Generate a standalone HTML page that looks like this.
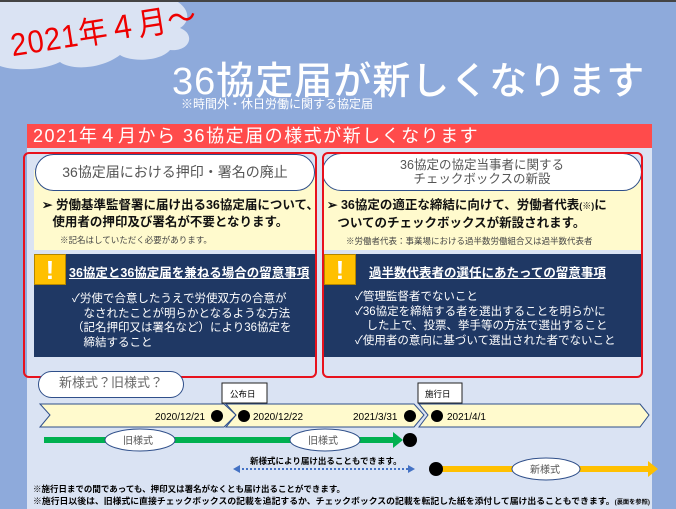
<!DOCTYPE html>
<html><head><meta charset="utf-8"><style>
*{margin:0;padding:0;box-sizing:border-box}
body{width:676px;height:509px;overflow:hidden;background:#8eaadb;position:relative;font-family:"Liberation Sans","Noto Sans CJK JP",sans-serif}
.a{position:absolute}
.pill{position:absolute;background:#fff;border:1.5px solid #2f4f8a;border-radius:20px;color:#555;text-align:center}
.yel{position:absolute;background:#fffacd}
.navy{position:absolute;background:#1f3864;color:#fff}
.ex{position:absolute;background:#ffc000;border:1px solid #b38600;color:#fff;font-weight:bold;text-align:center;font-size:26px;line-height:30px}
.box{position:absolute;border:2px solid #e8121d;border-radius:6px}
</style></head><body>
<div class="a" style="left:0;top:0;width:676px;height:2px;background:#444"></div>
<svg class="a" style="left:0;top:0" width="200" height="75"><path d="M0 2 H178 C190 10 190 22 180 28 C196 34 190 52 170 50 C160 62 130 62 120 55 C100 70 70 70 60 62 C40 72 10 70 0 66 Z" fill="#dae3f3"/></svg>
<div class="a" style="left:14px;top:24px;color:#e00;font-size:29px;transform:rotate(-9deg) scaleY(1.1);transform-origin:left bottom;white-space:nowrap;letter-spacing:1px">2021年４月～</div>
<div class="a" style="left:172px;top:50px;color:#fff;font-size:38px;font-weight:500;letter-spacing:1px;white-space:nowrap">36協定届が新しくなります</div>
<div class="a" style="left:181px;top:95px;color:#fff;font-size:12px">※時間外・休日労働に関する協定届</div>
<div class="a" style="left:27px;top:148px;width:625px;height:361px;background:#dae3f3"></div>
<div class="a" style="left:27px;top:124px;width:625px;height:24px;background:#ff4b4b;color:#fff;font-size:18px;line-height:24px;padding-left:6px;letter-spacing:1.5px;white-space:nowrap">2021年４月から 36協定届の様式が新しくなります</div>

<!-- left -->
<div class="yel" style="left:34px;top:170px;width:281px;height:80px"></div>
<div class="pill" style="left:35px;top:154px;width:280px;height:37px;font-size:14px;line-height:34px">36協定届における押印・署名の廃止</div>
<div class="a" style="left:42px;top:197px;font-size:12.5px;font-weight:bold;line-height:17px;color:#111">➢ 労働基準監督署に届け出る36協定届について、<br>&nbsp;&nbsp;&nbsp;使用者の押印及び署名が不要となります。</div>
<div class="a" style="left:60px;top:234px;font-size:8.5px;color:#444">※記名はしていただく必要があります。</div>
<div class="navy" style="left:34px;top:254px;width:281px;height:103px"></div>
<div class="ex" style="left:34px;top:254px;width:32px;height:31px">!</div>
<div class="a" style="left:69px;top:262px;color:#fff;font-size:12.5px;font-weight:bold;text-decoration:underline">36協定と36協定届を兼ねる場合の留意事項</div>
<div class="a" style="left:72px;top:292px;color:#fff;font-size:11.5px;line-height:14.5px;white-space:pre">✓労使で合意したうえで労使双方の合意が
　なされたことが明らかとなるような方法
（記名押印又は署名など）により36協定を
　締結すること</div>
<div class="box" style="left:23px;top:152px;width:294px;height:226px"></div>

<!-- right -->
<div class="yel" style="left:323px;top:170px;width:318px;height:80px"></div>
<div class="pill" style="left:322px;top:153px;width:320px;height:38px;font-size:12.5px;line-height:14px;padding-top:4px">36協定の協定当事者に関する<br>チェックボックスの新設</div>
<div class="a" style="left:327px;top:197px;font-size:12.5px;font-weight:bold;line-height:17px;color:#111">➢ 36協定の適正な締結に向けて、労働者代表<span style="font-size:9px">(※)</span>に<br>&nbsp;&nbsp;&nbsp;ついてのチェックボックスが新設されます。</div>
<div class="a" style="left:346px;top:235px;font-size:8.5px;color:#444">※労働者代表：事業場における過半数労働組合又は過半数代表者</div>
<div class="navy" style="left:324px;top:254px;width:317px;height:103px"></div>
<div class="ex" style="left:324px;top:254px;width:32px;height:31px">!</div>
<div class="a" style="left:369px;top:262px;color:#fff;font-size:12.5px;font-weight:bold;text-decoration:underline">過半数代表者の選任にあたっての留意事項</div>
<div class="a" style="left:355px;top:290px;color:#fff;font-size:11.5px;line-height:14.5px;white-space:pre">✓管理監督者でないこと
✓36協定を締結する者を選出することを明らかに
　した上で、投票、挙手等の方法で選出すること
✓使用者の意向に基づいて選出された者でないこと</div>
<div class="box" style="left:322px;top:152px;width:321px;height:226px"></div>

<!-- timeline -->
<svg class="a" style="left:0;top:370px" width="676" height="139" font-family="Liberation Sans,Noto Sans CJK JP,sans-serif">
<path d="M40 34 H224 L236 45 L224 57 H40 L50 45Z" fill="#fffacd" stroke="#2f4f8a"/>
<path d="M226 34 H414 L424 45 L414 57 H226 L236 45Z" fill="#fffacd" stroke="#2f4f8a"/>
<path d="M419 34 H640 L649 45 L640 57 H419 L428 45Z" fill="#fffacd" stroke="#2f4f8a"/>
<rect x="222" y="13" width="45" height="20" fill="#fff" stroke="#222"/><text x="230" y="27" font-size="8.5">公布日</text>
<rect x="418" y="13" width="44" height="20" fill="#fff" stroke="#222"/><text x="425" y="27" font-size="8.5">施行日</text>
<text x="155" y="50" font-size="10">2020/12/21</text>
<text x="253" y="50" font-size="10">2020/12/22</text>
<text x="353" y="50" font-size="10">2021/3/31</text>
<text x="447" y="50" font-size="10">2021/4/1</text>
<circle cx="217" cy="46" r="6"/><circle cx="244" cy="46" r="6"/><circle cx="410" cy="46" r="6"/><circle cx="437" cy="46" r="6"/>
<rect x="44" y="67" width="350" height="6" fill="#00b050"/><path d="M393 62 L403 70 L393 78Z" fill="#00b050"/>
<circle cx="410" cy="70" r="7"/>
<ellipse cx="140" cy="70" rx="35" ry="11" fill="#fff" stroke="#2f4f8a"/><text x="123" y="74" font-size="10" fill="#555">旧様式</text>
<ellipse cx="325" cy="70" rx="35" ry="11" fill="#fff" stroke="#2f4f8a"/><text x="308" y="74" font-size="10" fill="#555">旧様式</text>
<text x="250" y="94" font-size="8.5" font-weight="bold">新様式により届け出ることもできます。</text>
<line x1="238" y1="99" x2="410" y2="99" stroke="#4472c4" stroke-width="2" stroke-dasharray="2 2"/>
<path d="M240 95 L233 99 L240 103Z M408 95 L415 99 L408 103Z" fill="#4472c4"/>
<rect x="440" y="96" width="210" height="6" fill="#ffc000"/><path d="M648 91 L658 99 L648 107Z" fill="#ffc000"/>
<circle cx="436" cy="99" r="7"/>
<ellipse cx="546" cy="99" rx="34" ry="11" fill="#fff" stroke="#2f4f8a"/><text x="530" y="103" font-size="10" fill="#555">新様式</text>
<text x="33" y="122" font-size="8.5" font-weight="bold" textLength="312" lengthAdjust="spacingAndGlyphs">※施行日までの間であっても、押印又は署名がなくとも届け出ることができます。</text>
<text x="33" y="134" font-size="8.5" font-weight="bold" textLength="617" lengthAdjust="spacingAndGlyphs">※施行日以後は、旧様式に直接チェックボックスの記載を追記するか、チェックボックスの記載を転記した紙を添付して届け出ることもできます。<tspan font-size="6">(裏面を参照)</tspan></text>
</svg>
<div class="pill" style="left:38px;top:371px;width:146px;height:27px;font-size:13px;line-height:22px;color:#666;border-radius:14px">新様式？旧様式？</div>
</body></html>
